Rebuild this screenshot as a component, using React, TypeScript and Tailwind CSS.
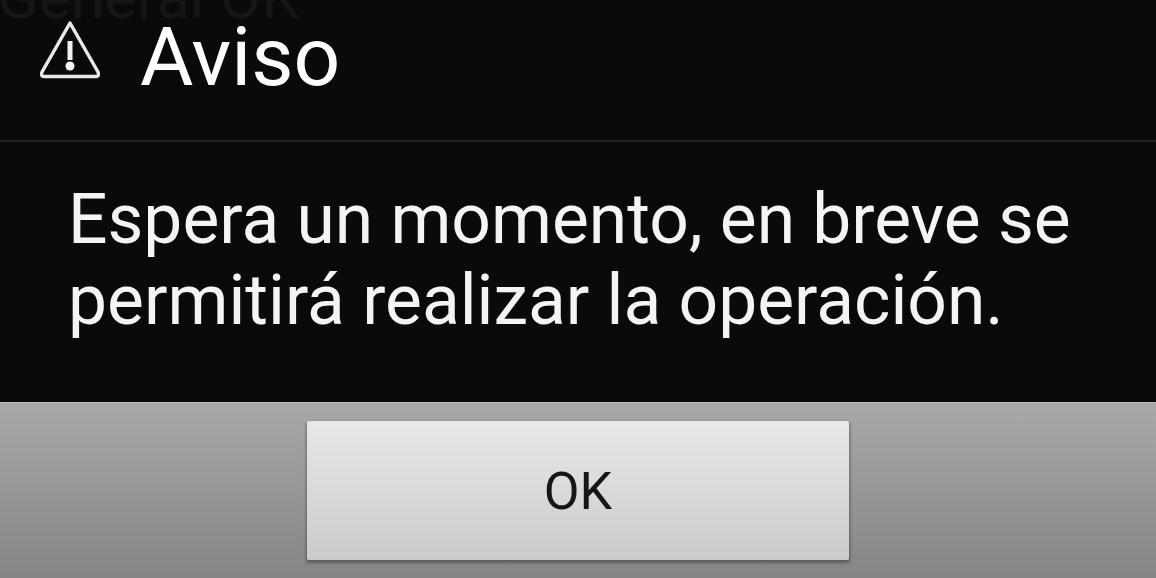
export default function App() {
  return (
    <div className="relative flex h-[578px] w-[1156px] flex-col overflow-hidden bg-[#0a0a0b] font-['Roboto',sans-serif]">
      <span className="absolute left-[-3px] top-[-35px] text-[61px] leading-[64px] text-[#161616] blur-[0.5px]">General OK</span>

      <div className="flex h-[140px] items-start pl-[40px] pt-[10px]">
        <svg viewBox="0 0 60 64" className="mt-[9px] h-[64px] w-[60px] blur-[0.5px]" fill="none">
          <path d="M30 4 L58 53 Q59.500 57.500 56 57.500 L4 57.500 Q0.500 57.500 2 53 Z" stroke="#e8e8e8" strokeWidth="3.500" strokeLinejoin="round" />
          <path d="M30 22 L30 41" stroke="#f0f0f0" strokeWidth="5" />
          <circle cx="30" cy="47" r="4.500" fill="#f4f4f4" />
        </svg>
        <h1 className="ml-[40px] text-[82px] leading-[94px] font-normal text-white blur-[0.5px]">Aviso</h1>
      </div>
      <div className="h-[2px] bg-[#222223]" />

      <div className="h-[260px] pl-[68px] pt-[37px] text-[69.5px] leading-[81px] text-[#f4f4f4] blur-[0.5px]">
        <p>Espera un momento, en breve se</p>
        <p>permitirá realizar la operación.</p>
      </div>

      <div className="flex flex-1 items-start justify-center border-t border-[#bdbdbd] bg-gradient-to-b from-[#a9a9a9] to-[#858585] pt-[18px]">
        <button className="flex h-[139px] w-[542px] items-center justify-center rounded-[2px] bg-gradient-to-b from-[#e8e8e8] to-[#cbcbcb] pt-[2px] text-[52px] text-[#161616] shadow-[0_2px_3px_1px_rgba(40,40,40,0.45)]">
          <span className="blur-[0.4px]">OK</span>
        </button>
      </div>
    </div>
  )
}
